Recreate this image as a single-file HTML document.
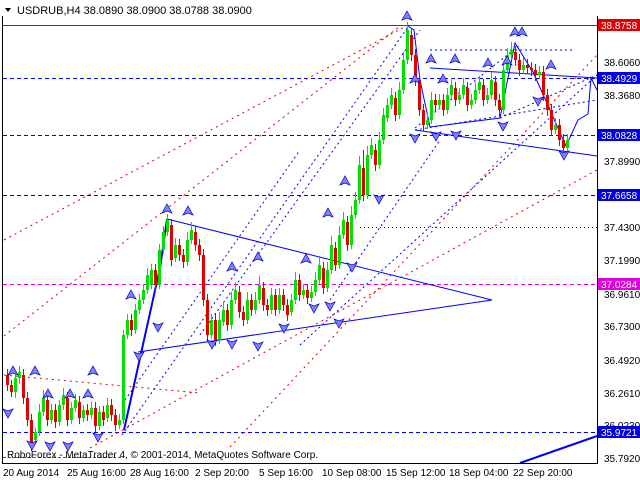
<!DOCTYPE html>
<html><head><meta charset="utf-8"><style>
html,body{margin:0;padding:0;background:#fff;width:640px;height:480px;overflow:hidden}
svg{display:block}
text{font-family:"Liberation Sans",sans-serif;font-size:10px}
</style></head><body>
<svg width="640" height="480" xmlns="http://www.w3.org/2000/svg">
<defs>
<path id="u" d="M0 -6 L5 3 L0 1 L-5 3 Z" fill="#8080ff" stroke="#0000c0" stroke-width="0.7"/>
<path id="d" d="M0 6 L5 -3 L0 -1 L-5 -3 Z" fill="#8080ff" stroke="#0000c0" stroke-width="0.7"/>
</defs>
<rect width="640" height="480" fill="#fff"/>
<line x1="2.5" y1="16" x2="2.5" y2="463" stroke="#000"/>
<line x1="597.5" y1="16" x2="597.5" y2="463" stroke="#000"/>
<line x1="2" y1="463.5" x2="598" y2="463.5" stroke="#000"/>
<path d="M5 8 L11 8 L8 12 Z" fill="#000"/>
<text x="17" y="14" fill="#000" style="font-size:11px">USDRUB,H4  38.0890 38.0900 38.0788 38.0900</text>
<line x1="3" y1="25.5" x2="597" y2="25.5" stroke="#e00000"/>
<g stroke="#0000ff" stroke-dasharray="4,3">
<line x1="3" y1="78.5" x2="597" y2="78.5"/>
<line x1="3" y1="135.5" x2="597" y2="135.5"/>
<line x1="3" y1="195.5" x2="597" y2="195.5"/>
<line x1="3" y1="432.5" x2="597" y2="432.5"/>
</g>
<line x1="360" y1="227.5" x2="597" y2="227.5" stroke="#0000ff" stroke-dasharray="1,3"/>
<line x1="3" y1="284.5" x2="597" y2="284.5" stroke="#e000e0" stroke-dasharray="4,3"/>
<line x1="3" y1="457.5" x2="122" y2="457.5" stroke="#e000e0" stroke-dasharray="3,2"/>
<g stroke="#e00000" stroke-dasharray="2,4" fill="none">
<line x1="4" y1="240" x2="410" y2="24"/>
<line x1="4" y1="336" x2="400" y2="26"/>
<line x1="230" y1="447" x2="597" y2="55"/>
<line x1="90" y1="448" x2="597" y2="170"/>
<line x1="4" y1="375" x2="200" y2="393"/>
</g>
<g stroke="#0000ff" stroke-dasharray="2,3" fill="none">
<line x1="122" y1="435" x2="408" y2="27"/>
<line x1="125" y1="400" x2="300" y2="150"/>
<line x1="200" y1="335" x2="420" y2="30"/>
<line x1="300" y1="345" x2="597" y2="75"/>
<line x1="330" y1="300" x2="440" y2="140"/>
<line x1="415" y1="128" x2="520" y2="45"/>
<line x1="430" y1="50" x2="575" y2="50"/>
<line x1="415" y1="130" x2="597" y2="100"/>
<line x1="500" y1="118" x2="597" y2="75"/>
</g>
<g stroke="#0000ff" fill="none">
<line x1="167" y1="219" x2="492" y2="300"/>
<line x1="138" y1="352" x2="492" y2="300"/>
<line x1="415" y1="130" x2="597" y2="156"/>
<line x1="430" y1="68" x2="597" y2="78"/>
<line x1="520" y1="463" x2="597" y2="436" stroke-width="2"/>
<polyline points="408,26 414,30 420,80 430,127 500,118 515,43 533,72 566,146 578,120 588,114 591,78 597,90"/>
<polyline points="124,430 160,268 167,219" stroke-width="2"/>
</g>
<!-- green candles -->
<g fill="#00e000">
<rect x="14" y="378" width="3" height="14"/><rect x="18" y="372" width="3" height="6"/><rect x="34" y="432" width="3" height="8"/><rect x="38" y="412" width="3" height="20"/><rect x="42" y="398" width="3" height="14"/><rect x="50" y="410" width="3" height="10"/><rect x="58" y="405" width="3" height="17"/><rect x="62" y="395" width="3" height="10"/><rect x="70" y="408" width="3" height="12"/><rect x="74" y="400" width="3" height="8"/><rect x="82" y="410" width="3" height="8"/><rect x="90" y="408" width="3" height="7"/><rect x="98" y="412" width="3" height="14"/><rect x="106" y="405" width="3" height="13"/><rect x="118" y="420" width="3" height="5"/><rect x="122" y="335" width="3" height="85"/><rect x="126" y="320" width="3" height="15"/><rect x="134" y="310" width="3" height="20"/><rect x="138" y="300" width="3" height="10"/><rect x="142" y="290" width="3" height="10"/><rect x="146" y="275" width="3" height="15"/><rect x="150" y="270" width="3" height="15"/><rect x="158" y="250" width="3" height="35"/><rect x="162" y="232" width="3" height="18"/><rect x="166" y="220" width="3" height="12"/><rect x="174" y="245" width="3" height="13"/><rect x="186" y="240" width="3" height="22"/><rect x="190" y="230" width="3" height="10"/><rect x="210" y="320" width="3" height="15"/><rect x="218" y="320" width="3" height="20"/><rect x="222" y="310" width="3" height="12"/><rect x="230" y="300" width="3" height="25"/><rect x="234" y="290" width="3" height="10"/><rect x="246" y="300" width="3" height="20"/><rect x="254" y="300" width="3" height="10"/><rect x="258" y="285" width="3" height="15"/><rect x="270" y="295" width="3" height="15"/><rect x="278" y="295" width="3" height="15"/><rect x="290" y="300" width="3" height="12"/><rect x="294" y="280" width="3" height="20"/><rect x="302" y="290" width="3" height="5"/><rect x="310" y="292" width="3" height="6"/><rect x="314" y="280" width="3" height="12"/><rect x="318" y="265" width="3" height="15"/><rect x="326" y="270" width="3" height="18"/><rect x="330" y="245" width="3" height="25"/><rect x="338" y="235" width="3" height="30"/><rect x="342" y="220" width="3" height="15"/><rect x="350" y="215" width="3" height="30"/><rect x="354" y="200" width="3" height="15"/><rect x="358" y="165" width="3" height="35"/><rect x="366" y="155" width="3" height="40"/><rect x="370" y="145" width="3" height="10"/><rect x="378" y="140" width="3" height="25"/><rect x="382" y="115" width="3" height="25"/><rect x="386" y="105" width="3" height="13"/><rect x="390" y="95" width="3" height="10"/><rect x="398" y="90" width="3" height="25"/><rect x="402" y="60" width="3" height="30"/><rect x="406" y="30" width="3" height="30"/><rect x="426" y="120" width="3" height="5"/><rect x="430" y="100" width="3" height="20"/><rect x="438" y="100" width="3" height="5"/><rect x="446" y="95" width="3" height="15"/><rect x="450" y="85" width="3" height="10"/><rect x="458" y="95" width="3" height="5"/><rect x="462" y="85" width="3" height="10"/><rect x="470" y="100" width="3" height="5"/><rect x="474" y="90" width="3" height="10"/><rect x="478" y="82" width="3" height="8"/><rect x="486" y="95" width="3" height="5"/><rect x="490" y="80" width="3" height="15"/><rect x="502" y="70" width="3" height="40"/><rect x="506" y="55" width="3" height="15"/><rect x="510" y="50" width="3" height="5"/><rect x="522" y="65" width="3" height="5"/><rect x="538" y="72" width="3" height="3"/><rect x="554" y="125" width="3" height="5"/><rect x="566" y="140" width="3" height="8"/>
</g>
<path fill="none" stroke="#00e000" d="M15.5 372V398M19.5 366V384M35.5 428V444M39.5 404V436M43.5 390V416M51.5 404V424M59.5 400V426M63.5 388V410M71.5 402V424M75.5 394V412M83.5 405V422M91.5 402V419M99.5 406V430M107.5 398V422M119.5 414V429M123.5 330V424M127.5 314V339M135.5 304V334M139.5 294V314M143.5 284V304M147.5 268V294M151.5 264V289M159.5 244V289M163.5 226V254M167.5 214V236M175.5 238V262M187.5 232V266M191.5 222V244M211.5 314V339M219.5 312V344M223.5 302V326M231.5 292V329M235.5 282V304M247.5 292V324M255.5 292V314M259.5 276V304M271.5 288V314M279.5 288V314M291.5 294V316M295.5 272V304M303.5 284V299M311.5 286V302M315.5 272V296M319.5 256V284M327.5 262V292M331.5 236V274M339.5 226V269M343.5 212V239M351.5 206V249M355.5 192V219M359.5 156V204M367.5 146V199M371.5 138V159M379.5 132V169M383.5 108V144M387.5 98V122M391.5 88V109M399.5 82V119M403.5 52V94M407.5 22V64M427.5 114V129M431.5 92V124M439.5 94V109M447.5 88V114M451.5 78V99M459.5 88V104M463.5 78V99M471.5 94V109M475.5 82V104M479.5 76V94M487.5 88V104M491.5 72V99M503.5 62V114M507.5 48V74M511.5 42V59M523.5 58V74M539.5 66V79M555.5 118V134M567.5 134V152"/>
<!-- red candles -->
<g fill="#e00000">
<rect x="6" y="375" width="3" height="10"/><rect x="10" y="385" width="3" height="7"/><rect x="22" y="375" width="3" height="23"/><rect x="26" y="398" width="3" height="22"/><rect x="30" y="420" width="3" height="25"/><rect x="46" y="400" width="3" height="20"/><rect x="54" y="410" width="3" height="12"/><rect x="66" y="398" width="3" height="22"/><rect x="78" y="402" width="3" height="16"/><rect x="86" y="410" width="3" height="5"/><rect x="94" y="408" width="3" height="18"/><rect x="102" y="412" width="3" height="8"/><rect x="110" y="405" width="3" height="10"/><rect x="114" y="415" width="3" height="10"/><rect x="130" y="320" width="3" height="10"/><rect x="154" y="270" width="3" height="15"/><rect x="170" y="225" width="3" height="35"/><rect x="178" y="245" width="3" height="10"/><rect x="182" y="255" width="3" height="7"/><rect x="194" y="232" width="3" height="13"/><rect x="198" y="245" width="3" height="10"/><rect x="202" y="255" width="3" height="45"/><rect x="206" y="300" width="3" height="35"/><rect x="214" y="320" width="3" height="20"/><rect x="226" y="310" width="3" height="15"/><rect x="238" y="292" width="3" height="20"/><rect x="242" y="312" width="3" height="8"/><rect x="250" y="300" width="3" height="10"/><rect x="262" y="288" width="3" height="17"/><rect x="266" y="305" width="3" height="5"/><rect x="274" y="295" width="3" height="15"/><rect x="282" y="295" width="3" height="10"/><rect x="286" y="305" width="3" height="10"/><rect x="298" y="280" width="3" height="15"/><rect x="306" y="290" width="3" height="8"/><rect x="322" y="268" width="3" height="20"/><rect x="334" y="248" width="3" height="17"/><rect x="346" y="222" width="3" height="23"/><rect x="362" y="168" width="3" height="27"/><rect x="374" y="150" width="3" height="15"/><rect x="394" y="98" width="3" height="17"/><rect x="410" y="35" width="3" height="20"/><rect x="414" y="55" width="3" height="25"/><rect x="418" y="80" width="3" height="30"/><rect x="422" y="110" width="3" height="15"/><rect x="434" y="100" width="3" height="5"/><rect x="442" y="100" width="3" height="10"/><rect x="454" y="88" width="3" height="12"/><rect x="466" y="88" width="3" height="17"/><rect x="482" y="85" width="3" height="15"/><rect x="494" y="82" width="3" height="18"/><rect x="498" y="100" width="3" height="10"/><rect x="514" y="52" width="3" height="8"/><rect x="518" y="60" width="3" height="10"/><rect x="526" y="65" width="3" height="3"/><rect x="530" y="68" width="3" height="2"/><rect x="534" y="70" width="3" height="5"/><rect x="542" y="72" width="3" height="23"/><rect x="546" y="95" width="3" height="15"/><rect x="550" y="110" width="3" height="20"/><rect x="558" y="125" width="3" height="15"/><rect x="562" y="140" width="3" height="8"/>
</g>
<path fill="none" stroke="#e00000" d="M7.5 369V391M11.5 380V397M23.5 369V404M27.5 392V426M31.5 414V451M47.5 394V426M55.5 404V428M67.5 392V426M79.5 396V424M87.5 404V421M95.5 402V432M103.5 406V426M111.5 399V421M115.5 409V431M131.5 314V336M155.5 264V291M171.5 219V266M179.5 239V261M183.5 249V268M195.5 226V251M199.5 239V261M203.5 249V306M207.5 294V341M215.5 314V346M227.5 304V331M239.5 286V318M243.5 306V326M251.5 294V316M263.5 282V311M267.5 299V316M275.5 289V316M283.5 289V311M287.5 299V321M299.5 274V301M307.5 284V304M323.5 262V294M335.5 242V271M347.5 216V251M363.5 150V201M375.5 144V171M395.5 92V121M411.5 29V61M415.5 49V86M419.5 74V116M423.5 104V131M435.5 94V111M443.5 94V116M455.5 82V106M467.5 82V111M483.5 79V106M495.5 76V106M499.5 94V116M515.5 46V66M519.5 54V76M527.5 59V74M531.5 62V76M535.5 64V81M543.5 66V101M547.5 89V116M551.5 104V136M559.5 119V146M563.5 134V154"/>
<!-- fractal marks -->
<use href="#u" x="13" y="372"/><use href="#u" x="35" y="372"/><use href="#u" x="93" y="372"/><use href="#u" x="48" y="395"/><use href="#u" x="70" y="395"/><use href="#u" x="88" y="395"/><use href="#u" x="131" y="296"/><use href="#u" x="167" y="210"/><use href="#u" x="188" y="212"/><use href="#u" x="232" y="268"/><use href="#u" x="258" y="258"/><use href="#u" x="306" y="260"/><use href="#u" x="328" y="214"/><use href="#u" x="345" y="182"/><use href="#u" x="407" y="17"/><use href="#u" x="431" y="60"/><use href="#u" x="455" y="60"/><use href="#u" x="488" y="64"/><use href="#u" x="515" y="33"/><use href="#u" x="522" y="33"/><use href="#u" x="551" y="66"/><use href="#u" x="415" y="80"/><use href="#u" x="443" y="80"/><use href="#u" x="507" y="62"/>
<use href="#d" x="8" y="412"/><use href="#d" x="32" y="444"/><use href="#d" x="50" y="445"/><use href="#d" x="68" y="445"/><use href="#d" x="98" y="436"/><use href="#d" x="139" y="355"/><use href="#d" x="158" y="326"/><use href="#d" x="212" y="343"/><use href="#d" x="232" y="343"/><use href="#d" x="258" y="345"/><use href="#d" x="284" y="327"/><use href="#d" x="314" y="307"/><use href="#d" x="330" y="305"/><use href="#d" x="339" y="322"/><use href="#d" x="352" y="266"/><use href="#d" x="379" y="198"/><use href="#d" x="415" y="137"/><use href="#d" x="436" y="135"/><use href="#d" x="456" y="134"/><use href="#d" x="503" y="125"/><use href="#d" x="538" y="100"/><use href="#d" x="564" y="154"/>
<!-- axis labels -->
<g fill="#000">
<text x="604" y="66">38.6060</text>
<text x="604" y="99">38.3680</text>
<text x="604" y="165">37.8990</text>
<text x="604" y="231">37.4300</text>
<text x="604" y="264">37.1990</text>
<text x="604" y="298">36.9610</text>
<text x="604" y="330">36.7300</text>
<text x="604" y="364">36.4920</text>
<text x="604" y="397">36.2610</text>
<text x="604" y="429">36.0230</text>
<text x="604" y="462">35.7920</text>
</g>
<rect x="598" y="19" width="42" height="12" fill="#e00000"/><text x="601" y="29" fill="#fff">38.8758</text>
<rect x="598" y="72" width="42" height="12" fill="#0000e0"/><text x="601" y="82" fill="#fff">38.4929</text>
<rect x="598" y="129" width="42" height="12" fill="#0000e0"/><text x="601" y="139" fill="#fff">38.0828</text>
<rect x="598" y="189" width="42" height="12" fill="#0000e0"/><text x="601" y="199" fill="#fff">37.6658</text>
<rect x="598" y="278" width="42" height="12" fill="#e000e0"/><text x="601" y="288" fill="#fff">37.0284</text>
<rect x="598" y="426" width="42" height="12" fill="#0000e0"/><text x="601" y="436" fill="#fff">35.9721</text>
<g fill="#000">
<text x="3" y="476">20 Aug 2014</text>
<text x="67" y="476">25 Aug 16:00</text>
<text x="130" y="476">28 Aug 16:00</text>
<text x="195" y="476">2 Sep 20:00</text>
<text x="259" y="476">5 Sep 16:00</text>
<text x="322" y="476">10 Sep 08:00</text>
<text x="386" y="476">15 Sep 12:00</text>
<text x="449" y="476">18 Sep 04:00</text>
<text x="513" y="476">22 Sep 20:00</text>
</g>
<text x="7" y="458" fill="#000">RoboForex - MetaTrader 4, © 2001-2014, MetaQuotes Software Corp.</text>
</svg>
</body></html>
